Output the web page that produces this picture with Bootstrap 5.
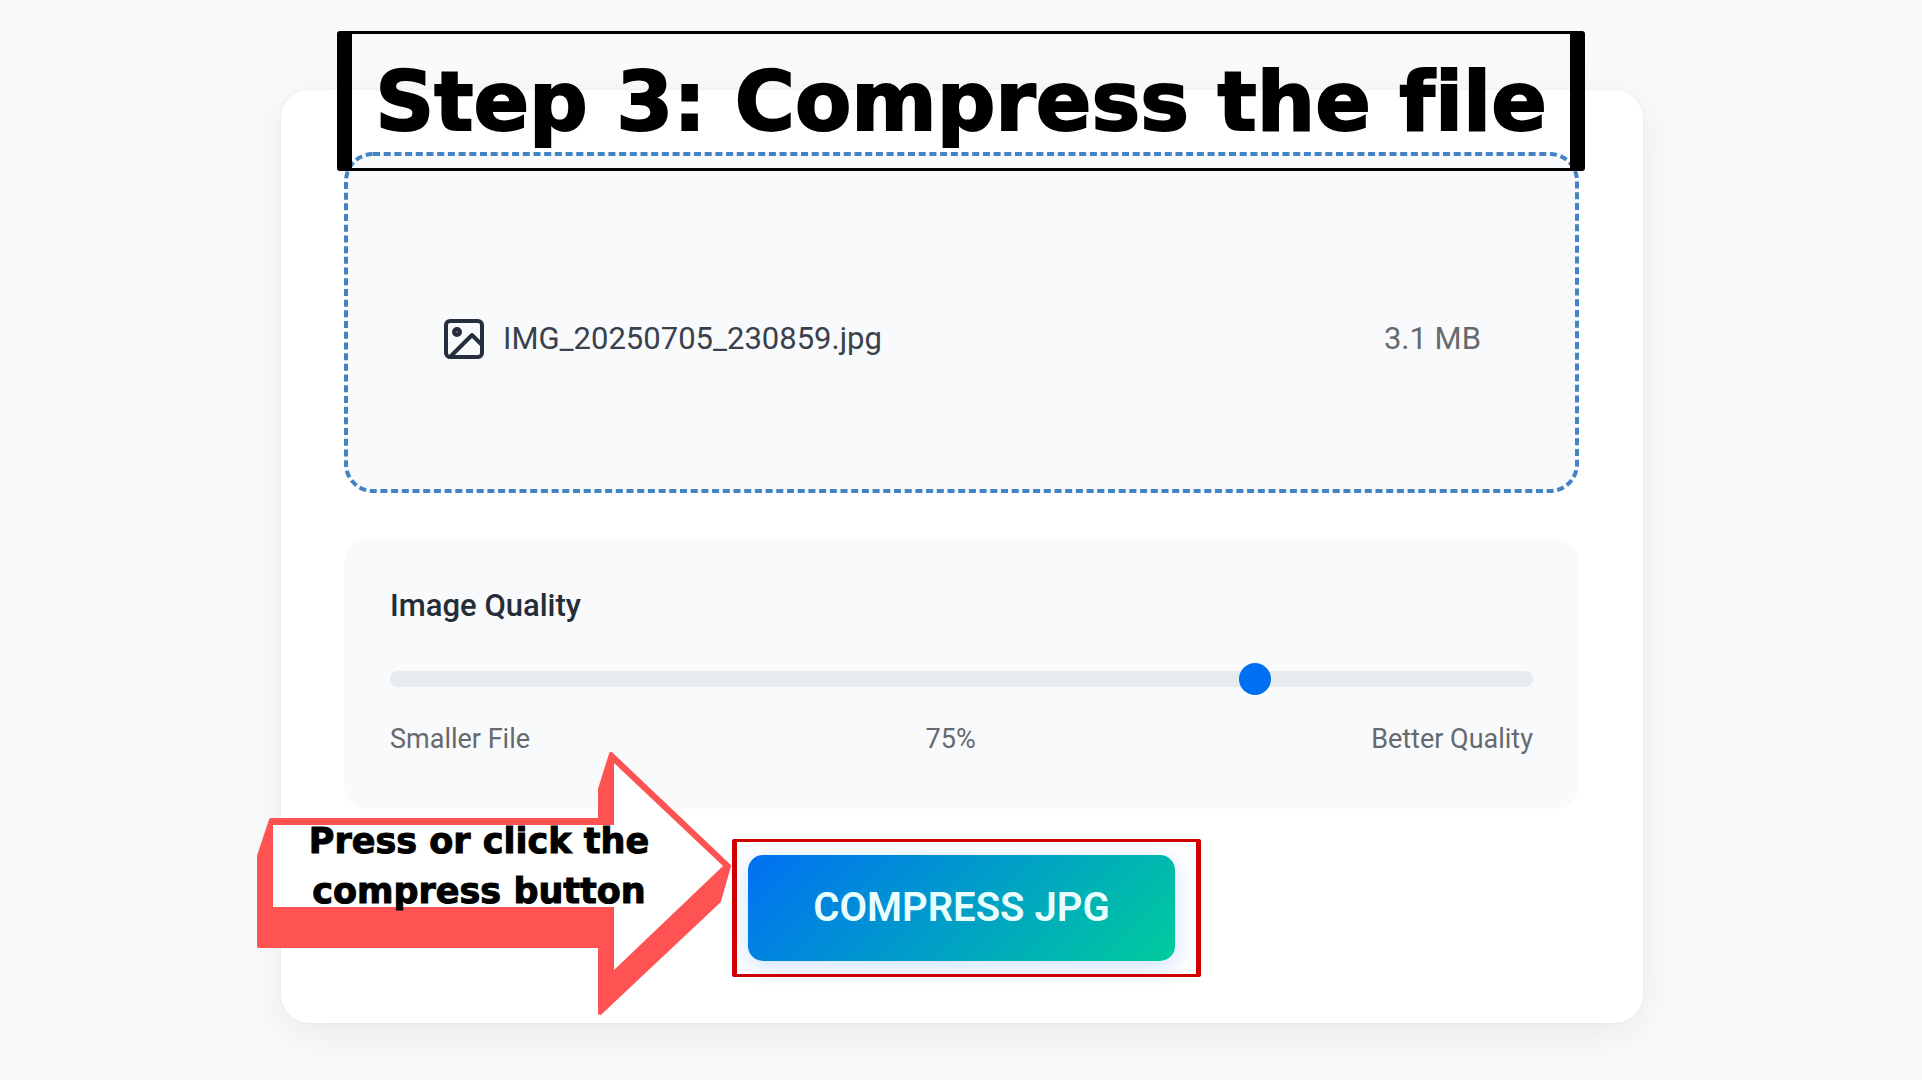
<!DOCTYPE html>
<html lang="en">
<head>
<meta charset="utf-8">
<meta name="viewport" content="width=device-width, initial-scale=1">
<title>Compress JPG</title>
<link rel="stylesheet" href="https://cdn.jsdelivr.net/npm/bootstrap@5.3.0/dist/css/bootstrap.min.css">
<style>
  body { background: #f9fafc; font-family: Roboto, "Liberation Sans", sans-serif; font-size: 31px; line-height: 40px; color: #252d38; }
  .page { padding: 90px 24px 56px 26px; }
  .tool { max-width: 1362px; padding: 62px 64px 62px 63px; background: #fff; border-radius: 28px; box-shadow: 0 10px 40px rgba(0, 0, 0, .07), 0 0 3px rgba(0, 0, 0, .05); }
  .stack { gap: 46px; }
  .drop { min-height: 341px; padding: 32px 98px 0 100px; background: #f9fafc; border-radius: 28px; }
  .dashes { inset: 0; }
  .file-icon { width: 40px; height: 40px; margin-right: 19px; }
  .file-name { color: #3a414c; }
  .muted { color: #666a6e; }
  .quality { padding: 47px 46px 46px; background: #f9fafc; border-radius: 24px; }
  .quality-title { font-weight: 500; line-height: 40px; margin-bottom: 37px; }
  .scale { font-size: 27px; line-height: 40px; margin-top: 24px; margin-bottom: 4px; }
  .slider { display: block; width: 100%; height: 32px; padding: 0; background: transparent; appearance: none; }
  .slider::-webkit-slider-runnable-track { height: 16px; border-radius: 8px; background: #e8ebee; }
  .slider::-webkit-slider-thumb { appearance: none; width: 32px; height: 32px; margin-top: -8px; border: 0; border-radius: 50%; background: #0070f3; }
  .go { min-width: 427px; padding: 23px 48px; font-size: 40px; line-height: 60px; font-weight: 600; color: #e9ffff; border: 0; border-radius: 15px; background: linear-gradient(135deg, #0070f3, #00cc9c); box-shadow: 0 6px 24px rgba(0, 112, 243, .2); }
  .go:hover { color: #fff; }
  .go-frame { inset: -16px -26px -16px -16px; border: solid #d00000; border-width: 3px 5px; border-radius: 2px; }
  .banner { top: -59px; left: 56px; right: 58px; height: 140px; border: solid #000; border-width: 3px 15px; border-radius: 3px; }
  .banner h1, .callout p { font-family: "DejaVu Sans", "Liberation Sans", sans-serif; font-weight: 700; font-variant-ligatures: none; color: #000; }
  .banner h1 { font-size: 82px; line-height: 136px; white-space: nowrap; -webkit-text-stroke: 2px #000; }
  .callout { left: -24px; bottom: 7px; width: 474px; height: 266px; }
  .callout p { top: 66px; left: 36px; width: 372px; font-size: 35px; line-height: 50px; -webkit-text-stroke: 1px #000; }
</style>
<script src="https://cdn.jsdelivr.net/npm/bootstrap@5.3.0/dist/js/bootstrap.bundle.min.js"></script>
</head>
<body>
<div class="page min-vh-100">
  <main class="tool position-relative mx-auto">
    <div class="stack d-flex flex-column">
      <section class="drop position-relative d-flex align-items-center">
        <svg class="dashes position-absolute w-100 h-100 overflow-visible" aria-hidden="true">
          <rect x="2" y="2" rx="27" fill="none" stroke="#4183c4" stroke-width="4" stroke-dasharray="7 3.7" style="width:calc(100% - 4px);height:calc(100% - 4px)"/>
        </svg>
        <svg class="file-icon flex-shrink-0" viewBox="2 2 20 20" fill="none" stroke="#252f3d" stroke-width="2" stroke-linejoin="round" stroke-linecap="round" aria-hidden="true">
          <rect x="3" y="3" width="18" height="18" rx="2"/>
          <circle cx="8.5" cy="8.5" r="1.5" fill="#666e79"/>
          <path d="M21 15l-5-5L5 21"/>
        </svg>
        <span class="file-name">IMG_20250705_230859.jpg</span>
        <span class="muted ms-auto">3.1 MB</span>
      </section>

      <section class="quality">
        <label class="quality-title d-block" for="quality">Image Quality</label>
        <input class="slider" type="range" id="quality" min="0" max="100" step="0.1" value="76.4">
        <div class="scale muted d-flex justify-content-between">
          <span>Smaller File</span><span>75%</span><span>Better Quality</span>
        </div>
      </section>

      <div class="d-flex justify-content-center">
        <div class="position-relative">
          <button class="go btn d-block" type="button">COMPRESS JPG</button>
          <div class="go-frame position-absolute pe-none"></div>
        </div>
      </div>
    </div>

    <div class="banner position-absolute d-flex justify-content-center">
      <h1 class="m-0">Step 3: Compress the file</h1>
    </div>

    <div class="callout position-absolute">
      <svg class="d-block" width="474" height="266" viewBox="257 750 474 266" aria-hidden="true">
        <path fill="#ff5353" stroke="#ff5353" stroke-width="4" stroke-linejoin="round" d="M271 820H600V789L611 754L729 866L719 901L600 1013V946H259V856Z"/>
        <path fill="#fff" d="M273 825H614V763L723 866L614 970V907H273Z"/>
      </svg>
      <p class="position-absolute m-0 text-center text-nowrap">Press or click the<br>compress button</p>
    </div>
  </main>
</div>
</body>
</html>
